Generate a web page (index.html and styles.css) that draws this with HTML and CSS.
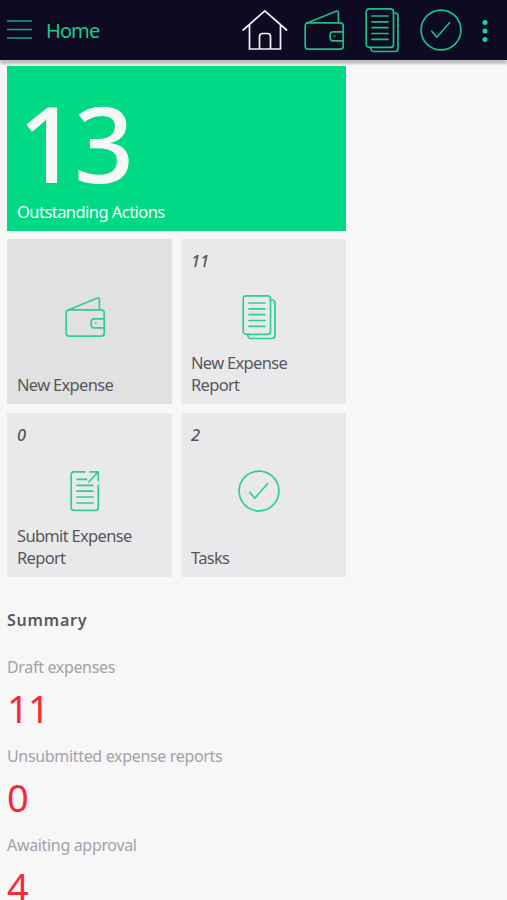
FILE: index.html
```html
<!DOCTYPE html>
<html lang="en">
<head>
<meta charset="utf-8">
<title>Home</title>
<link rel="stylesheet" href="styles.css">
</head>
<body>
<svg class="sprite" aria-hidden="true">
  <symbol id="home" viewBox="0 0 48 48"><path d="M2.2 24 23.8 4.8 45.6 24M8.5 19v24h31V19M18.5 43V30.5q0-3 3-3h5q3 0 3 3V43"/></symbol>
  <symbol id="wallet" viewBox="0 0 48 48"><rect x="5.2" y="16.8" width="38" height="26.4" rx="3"/><path d="M6.5 17.2 36 5.2q2.4-.7 2.4 1.8v9.8M43.2 25.8H33q-2.800 0-2.800 2.800v3.400q0 2.800 2.800 2.800h10.200"/><circle cx="34.500" cy="30.300" r=".3"/></symbol>
  <symbol id="report" viewBox="0 0 48 48"><rect x="8.200" y="2.800" width="27.300" height="38.600" rx="3"/><path d="M35.500 7h1.700q2.800 0 2.800 3v32.500q0 3-3 3H15.500q-2.500 0-2.800-4M14 10h16M14 15.800h16M14 21.600h16M14 27.500h16M14 33.400h16"/></symbol>
  <symbol id="submit" viewBox="0 0 48 48"><path d="M24 4.800H13q-2.800 0-2.800 2.800v33q0 2.800 2.800 2.800h21.500q2.800 0 2.800-2.800V18M29 4.800h8.300v8.800M37 5 28 14.800M16 12.300h9.500M16 18.300h16M16 24.200h16M16 30h16M16 36h16"/></symbol>
  <symbol id="check" viewBox="0 0 48 48"><circle cx="24" cy="24" r="19.900"/><path d="M14.800 25.200 19.800 31.200 32.500 16.700"/></symbol>
</svg>
<header class="bar">
  <svg class="menu" viewBox="0 0 26 22"><path d="M0 2h25M0 10.500h25M0 19h25"/></svg>
  <h1 class="title">Home</h1>
  <nav class="nav">
    <svg class="icon icon-active"><use href="#home"/></svg>
    <svg class="icon"><use href="#wallet"/></svg>
    <svg class="icon"><use href="#report"/></svg>
    <svg class="icon"><use href="#check"/></svg>
  </nav>
  <svg class="more" viewBox="0 0 6 24"><circle cx="3" cy="3.500" r="2.500"/><circle cx="3" cy="12" r="2.500"/><circle cx="3" cy="20.500" r="2.500"/></svg>
</header>
<main class="content">
  <section class="tiles">
    <div class="tile tile-wide"><span class="total">13</span><span class="label label-total">Outstanding Actions</span></div>
    <div class="tile tile-pressed"><span class="count"></span><svg class="icon"><use href="#wallet"/></svg><span class="label">New Expense</span></div>
    <div class="tile"><span class="count">11</span><svg class="icon"><use href="#report"/></svg><span class="label">New Expense<br>Report</span></div>
    <div class="tile"><span class="count">0</span><svg class="icon"><use href="#submit"/></svg><span class="label">Submit Expense<br>Report</span></div>
    <div class="tile"><span class="count">2</span><svg class="icon"><use href="#check"/></svg><span class="label">Tasks</span></div>
  </section>
  <section class="summary">
    <h2 class="heading">Summary</h2>
    <dl class="stats">
      <dt>Draft expenses</dt><dd>11</dd>
      <dt>Unsubmitted expense reports</dt><dd>0</dd>
      <dt>Awaiting approval</dt><dd>4</dd>
    </dl>
  </section>
</main>
</body>
</html>
```
FILE: styles.css
```css
* { box-sizing: border-box; }
html, body { height: 100%; overflow: hidden; }
body {
  margin: 0;
  background: #f7f7f7;
  color: #58585c;
  font-family: "Noto Sans", sans-serif;
}
.sprite { display: none; }
.bar {
  display: flex;
  align-items: center;
  height: 60px;
  padding-left: 7px;
  background: #0d0a22;
  box-shadow: 0 4px 2px #c0bfc4;
}
.menu { width: 26px; height: 22px; margin-right: 13px; fill: none; stroke: #15a878; stroke-width: 1.6; }
.title { width: 195px; margin: 1px 0 0; color: #18ca8c; font-size: 20px; font-weight: 400; letter-spacing: -0.9px; }
.nav { display: flex; gap: 10.7px; }
.icon {
  display: block;
  flex: none;
  width: 48px;
  height: 48px;
  fill: none;
  stroke: #1bbf86;
  stroke-width: 1.7;
  stroke-linecap: round;
  stroke-linejoin: round;
}
.icon-active { stroke: #f2f2f7; }
.more { width: 6px; height: 24px; margin: 2px 0 0 17px; fill: #18d993; }
.content { padding: 6px 7px 0; }
.tiles {
  display: grid;
  grid-template-columns: 165px 165px;
  grid-template-rows: repeat(3, 164.7px);
  gap: 8.7px 9px;
}
.tile {
  display: flex;
  flex-direction: column;
  padding: 11px 10px 8px;
  background: #e9e9eb;
}
.tile .icon { margin: 21px 0 0 44px; stroke: #2fce96; }
.tile-pressed { background: #e1e1e1; }
.tile-wide { grid-column: span 2; background: #00da85; color: #f7f7f7; }
.total { font-size: 105px; font-weight: 500; line-height: 106px; margin-left: 1px; margin-top: 13px; letter-spacing: -4px; }
.count { height: 22px; font-size: 16.5px; font-style: italic; font-weight: 500; line-height: 22px; }
.label { margin-top: auto; font-size: 16.5px; line-height: 22px; letter-spacing: -0.68px; }
.label-total { letter-spacing: -0.55px; }
.heading { margin: 32px 0 0; font-size: 16px; font-weight: 600; line-height: 22px; letter-spacing: 0.8px; }
.stats { margin: 25px 0 0; }
.stats dt { color: #a2a2aa; font-size: 16px; line-height: 22px; letter-spacing: -0.33px; }
.stats dd { margin: 8px 0 14px; color: #f7283a; font-size: 38px; font-weight: 400; line-height: 45px; letter-spacing: -0.7px; }
```
